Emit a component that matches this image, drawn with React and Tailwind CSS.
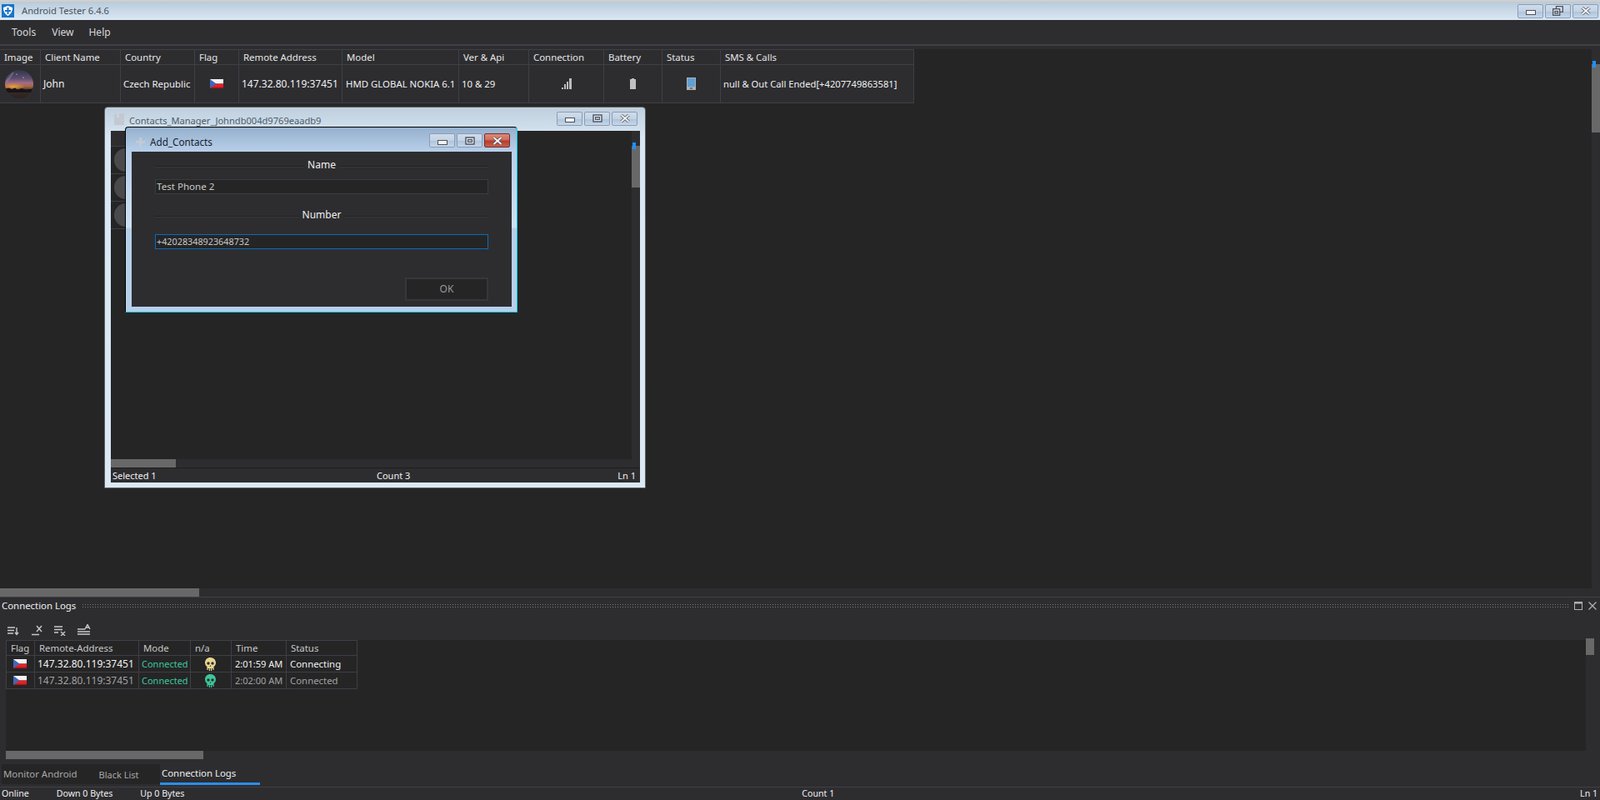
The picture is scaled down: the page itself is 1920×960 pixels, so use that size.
import React from 'react';

const mainCols = 'grid grid-cols-[49px_96px_89px_53px_124px_140px_84px_90px_70px_70px_232px]';
const logCols = 'grid grid-cols-[34px_125px_62px_49px_66px_85px]';

const mainHeaders = ['Image', 'Client Name', 'Country', 'Flag', 'Remote Address', 'Model', 'Ver & Api', 'Connection', 'Battery', 'Status', 'SMS & Calls'];
const logHeaders = ['Flag', 'Remote-Address', 'Mode', 'n/a', 'Time', 'Status'];

const logRows = [
  { address: '147.32.80.119:37451', time: '2:01:59 AM', status: 'Connecting', skull: '#e8d590', text: 'text-[#f2f2f2]' },
  { address: '147.32.80.119:37451', time: '2:02:00 AM', status: 'Connected', skull: '#3cc79b', text: 'text-[#a2a2a2]' },
];

const CzechFlag = () => (
  <svg width="16" height="11" viewBox="0 0 16 11">
    <rect width="16" height="5.5" fill="#f4f4f6" />
    <rect y="5.5" width="16" height="5.5" fill="#e0242c" />
    <rect y="9.5" width="16" height="1.5" fill="#b5121a" />
    <path d="M0 0 L7.5 5.5 L0 11 Z" fill="#3f68b8" />
  </svg>
);

const Avatar = () => (
  <svg width="34" height="34" viewBox="0 0 34 34">
    <defs>
      <linearGradient id="sky" x1="0" y1="0" x2="0" y2="1">
        <stop offset="0" stopColor="#33344c" />
        <stop offset="0.3" stopColor="#5c4f6c" />
        <stop offset="0.46" stopColor="#a56c88" />
        <stop offset="0.58" stopColor="#a8683e" />
        <stop offset="0.72" stopColor="#3c2c26" />
        <stop offset="1" stopColor="#2a211f" />
      </linearGradient>
      <radialGradient id="glow" cx="0.5" cy="0.5" r="0.5">
        <stop offset="0" stopColor="#eca238" />
        <stop offset="1" stopColor="#eca238" stopOpacity="0" />
      </radialGradient>
      <clipPath id="round"><circle cx="17" cy="17" r="17" /></clipPath>
    </defs>
    <g clipPath="url(#round)">
      <rect width="34" height="34" fill="url(#sky)" />
      <ellipse cx="10" cy="20" rx="14" ry="4.5" fill="url(#glow)" />
      <path d="M2 14 L10 3" stroke="#8c90a8" strokeWidth="2" opacity="0.5" />
      <path d="M0 22.5 L5 21.5 L8 23 L12 21.5 L15 23.5 L20 22 L25 23.5 L34 22.5 V27 H0 Z" fill="#17141a" />
      <circle cx="14" cy="5" r="0.6" fill="#fff" />
      <circle cx="22" cy="9" r="0.6" fill="#fff" />
    </g>
  </svg>
);

const SignalIcon = () => (
  <svg width="12" height="13" viewBox="0 0 12 13" fill="#bcbcbc">
    <rect x="0" y="11" width="2" height="2" />
    <rect x="3" y="7" width="2" height="6" />
    <rect x="6" y="4" width="2" height="9" />
    <rect x="9" y="0" width="3" height="13" />
  </svg>
);

const BatteryIcon = () => (
  <svg width="7" height="13" viewBox="0 0 7 13" fill="#c0c0c0">
    <rect x="2" y="0" width="3" height="1" />
    <rect x="0" y="1" width="7" height="12" />
  </svg>
);

const TabletIcon = () => (
  <svg width="11" height="15" viewBox="0 0 11 15">
    <rect width="11" height="15" fill="#b0b0b0" />
    <rect x="1" y="1" width="9" height="10" fill="#5f9fd4" />
    <rect x="4" y="12.5" width="3" height="1" fill="#333" />
  </svg>
);

const Skull = ({ color }) => (
  <svg width="13" height="16" viewBox="0 0 13 16">
    <path d="M6.5 0 C10.2 0 13 2.6 13 6.2 C13 8.6 11.8 10 10.6 10.8 V15 H9.4 V13 H8.2 V16 H7 V13 H6 V16 H4.8 V13 H3.6 V15 H2.4 V10.8 C1.2 10 0 8.6 0 6.2 C0 2.6 2.8 0 6.5 0 Z" fill={color} />
    <circle cx="4" cy="7" r="1.7" fill="#2a2a2c" />
    <circle cx="9" cy="7" r="1.7" fill="#2a2a2c" />
    <path d="M6.5 9 L7.4 10.8 H5.6 Z" fill="#2a2a2c" />
  </svg>
);

// caption buttons, same frame everywhere, only the glyph and tint change
const CaptionButton = ({ kind, danger }) => (
  <div className={`w-[31px] h-[17px] rounded-[2px] border flex items-center justify-center ${danger
    ? 'border-[#7a2c2c] bg-[linear-gradient(#dc8a78_0%,#cf6a5a_48%,#b03c30_52%,#c9604c_100%)]'
    : 'border-[#8b9cb8] bg-[linear-gradient(#cfdcea_0%,#c3d3e4_50%,#adc3da_52%,#c6d7e8_100%)]'}`}>
    {kind === 'min' && (
      <svg width="12" height="6" viewBox="0 0 12 6" className="mt-1">
        <rect x="0.5" y="0.5" width="11" height="5" fill="#f2f2f2" stroke="#4b5260" />
      </svg>
    )}
    {kind === 'max' && (
      <svg width="12" height="10" viewBox="0 0 12 10">
        <rect x="1" y="1" width="10" height="8" fill="#e4e8ee" stroke="#4b5260" strokeWidth="1.4" />
        <rect x="3.5" y="3.5" width="5" height="3" fill="#aab7c8" stroke="#4b5260" />
      </svg>
    )}
    {kind === 'restore' && (
      <svg width="13" height="12" viewBox="0 0 13 12" fill="none" stroke="#4b5260" strokeWidth="1.3">
        <rect x="4.5" y="0.7" width="7.8" height="6.6" fill="#dfe5ec" />
        <rect x="0.7" y="3.7" width="8" height="7.6" fill="#dfe5ec" />
        <rect x="3" y="6.5" width="3.5" height="2.5" />
      </svg>
    )}
    {kind === 'close' && (
      <svg width="12" height="10" viewBox="0 0 12 10">
        <path d="M1.5 1 L10.5 9 M10.5 1 L1.5 9" stroke="#4b5260" strokeWidth="3.4" />
        <path d="M1.5 1 L10.5 9 M10.5 1 L1.5 9" stroke="#f4f4f4" strokeWidth="1.8" />
      </svg>
    )}
  </div>
);

const Toolbar = () => (
  <div className="h-[30px] flex items-end pb-[3px] pl-[9px] gap-[14px] text-[#c8c8c8]">
    <svg width="14" height="13" viewBox="0 0 14 13" fill="none" stroke="currentColor" strokeWidth="1.4">
      <path d="M0 3 H9 M0 6.5 H8 M0 10 H7 M11 3 V11 M9 9 L11 11.5 L13 9" />
    </svg>
    <svg width="13" height="14" viewBox="0 0 13 14" fill="none" stroke="currentColor" strokeWidth="1.4" className="ml-px">
      <path d="M0 12.5 H9 M6 2 L12 9 M12 2 L6 9" />
    </svg>
    <svg width="14" height="13" viewBox="0 0 14 13" fill="none" stroke="currentColor" strokeWidth="1.4">
      <path d="M0 2 H10 M0 5.5 H10 M0 9 H5 M8 8 L13 13 M13 8 L8 13" />
    </svg>
    <svg width="16" height="14" viewBox="0 0 16 14" fill="none" stroke="currentColor" strokeWidth="1.4">
      <path d="M0 6 H9 M0 9 H15 M0 12 H15 M9 6 L12 0.5 L15 6 M10 4 H14" />
    </svg>
  </div>
);

const AddContactsDialog = () => (
  <div className="absolute left-[150px] top-[152px] w-[471px] h-[223px] rounded-t-[4px] border border-black border-r-[#10c8e0] border-b-[#10c8e0] flex flex-col bg-[linear-gradient(#96b0cd_0%,#b7cfe9_13%,#cfe1f3_54%,#b6cfe9_55%,#b6cfe9_100%)]">
    <div className="h-[29px] flex items-center pl-[12px] pr-[8px] pt-[5px]">
      <svg width="11" height="11" viewBox="0 0 11 11" fill="#c0cbd6">
        <path d="M4 0 H7 V4 H11 V7 H7 V11 H4 V7 H0 V4 H4 Z" />
      </svg>
      <span className="ml-[6px] mt-px text-[11.7px] text-[#18222e]">Add_Contacts</span>
      <div className="ml-auto flex gap-[2px] -mt-[3px]">
        <CaptionButton kind="min" />
        <CaptionButton kind="max" />
        <CaptionButton kind="close" danger />
      </div>
    </div>
    <div className="ml-[7px] mr-[6px] mb-[6px] flex-1 bg-[#2d2d30] px-[28px] pt-[8px] text-[#c8c8c8]">
      <div className="flex items-center h-4 gap-[5px] text-[12px] text-[#f0f0f0]">
        <div className="flex-1 h-[2px] mt-1 bg-[#1f1f22] border-b border-[#3a3a3e]" />
        <span>Name</span>
        <div className="flex-1 h-[2px] mt-1 bg-[#1f1f22] border-b border-[#3a3a3e]" />
      </div>
      <div className="mt-[9px] h-[18px] px-[1px] flex items-center bg-[#252526] border border-[#3c3c40] text-[11.6px]">Test Phone 2</div>
      <div className="mt-[17px] flex items-center h-4 gap-[5px] text-[12px] text-[#f0f0f0]">
        <div className="flex-1 h-[2px] mt-1 bg-[#1f1f22] border-b border-[#3a3a3e]" />
        <span>Number</span>
        <div className="flex-1 h-[2px] mt-1 bg-[#1f1f22] border-b border-[#3a3a3e]" />
      </div>
      <div className="mt-[15px] h-[18px] px-[1px] flex items-center bg-[#252526] border border-[#0b6cb8] text-[10.8px]">+42028348923648732</div>
      <div className="mt-[34px] flex justify-end">
        <div className="w-[100px] h-[28px] flex items-center justify-center bg-[#252526] border-2 border-[#37373b] text-[12px] text-[#999999]">OK</div>
      </div>
    </div>
  </div>
);

const ContactsWindow = () => (
  <div className="absolute left-[125px] top-[128px] w-[650px] h-[458px] rounded-t-[4px] border border-[#5c5f63] flex flex-col bg-[linear-gradient(#bfcfdd_0%,#d8e6f3_8%,#dce9f5_100%)]">
    <div className="h-[28px] flex items-center pl-[11px] pr-[9px]">
      <svg width="12" height="14" viewBox="0 0 12 14" fill="#c4c9cf">
        <path d="M0 1 H3 V5 H6 V0 H11 L12 1 V14 H0 Z" />
      </svg>
      <span className="ml-[6px] mt-[4px] text-[11.1px] text-[#4d5c6b]">Contacts_Manager_Johndb004d9769eaadb9</span>
      <div className="ml-auto flex gap-[2px] -mt-[2px]">
        <CaptionButton kind="min" />
        <CaptionButton kind="max" />
        <CaptionButton kind="close" />
      </div>
    </div>
    <div className="ml-[7px] mr-[6px] mb-[6px] flex-1 flex flex-col bg-[#2d2d30]">
      <div className="h-[394px] flex">
        <div className="flex-1 bg-[#252526] flex flex-col">
          <div className="w-[400px] h-[19px] bg-[#2d2d30] border-b border-[#3f3f46]" />
          {['1', '2', '3'].map((id) => (
            <div key={id} className="w-[400px] h-[33px] border-b border-[#3f3f46] flex items-center pl-[4px]">
              <div className="w-7 h-7 rounded-full bg-[#4a4a4c]" />
            </div>
          ))}
        </div>
        <div className="w-2.5 bg-[#2d2d30] pt-[18px] relative">
          <div className="h-[50px] bg-[#686868]" />
          <div className="absolute left-[1px] top-[14px] w-1 h-2 bg-[#1e90ff]" />
        </div>
      </div>
      <div className="h-2.5 bg-[#2d2d30]">
        <div className="h-full w-[78px] bg-[#686868]" />
      </div>
      <div className="h-[18px] border-t border-[#1e1e20] grid grid-cols-[317px_1fr_1fr] items-center px-[2px] text-[11px] text-[#f0f0f0]">
        <span>Selected 1</span>
        <span>Count 3</span>
        <span className="text-right pr-[3px]">Ln 1</span>
      </div>
    </div>
  </div>
);

export default function App() {
  return (
    <div className="relative w-[1920px] h-[960px] overflow-hidden flex flex-col bg-[#2d2d30] text-[11.4px] leading-none font-['Open_Sans',sans-serif] text-[#f0f0f0]">
      {/* title bar */}
      <div className="h-6 flex items-center pl-[2px] pr-[2px] border-t-2 border-[#d0d0d0] bg-[linear-gradient(#b9cada,#dbe8f4)]">
        <svg width="15" height="16" viewBox="0 0 15 16">
          <rect width="15" height="16" fill="#1874c8" />
          <path d="M7.5 2 L13 4 C13 9 11 12 7.5 14 C4 12 2 9 2 4 Z" fill="#fff" />
          <path d="M6.5 4 H8.5 V7 H11 V9 H8.5 V12 H6.5 V9 H4 V7 H6.5 Z" fill="#1874c8" />
        </svg>
        <span className="ml-[9px] text-[11.2px] text-[#46535f]">Android Tester 6.4.6</span>
        <div className="ml-auto flex gap-[2px]">
          <CaptionButton kind="min" />
          <CaptionButton kind="restore" />
          <CaptionButton kind="close" />
        </div>
      </div>

      {/* menu */}
      <div className="h-[29px] flex items-center pl-[14px] text-[12px] text-[#d8d8d8]">
        <span>Tools</span>
        <span className="ml-[19px]">View</span>
        <span className="ml-[18px]">Help</span>
      </div>
      <div className="h-[2px] bg-[#3f3f46]" />

      {/* clients list */}
      <div className="mt-1 h-[647px] flex">
        <div className="flex-1 bg-[#252526]">
          <div className="w-[1097px] border-t border-r border-[#3f3f46] bg-[#2d2d30]">
            <div className={`${mainCols} h-[18px] border-b border-[#3f3f46] text-[#e6e6e6]`}>
              {mainHeaders.map((h) => (
                <div key={h} className="border-r border-[#3f3f46] last:border-r-0 flex items-center pl-[5px]">{h}</div>
              ))}
            </div>
            <div className={`${mainCols} h-[46px] border-b border-[#3f3f46]`}>
              <div className="border-r border-[#3f3f46] flex items-center pl-[6px]"><Avatar /></div>
              <div className="border-r border-[#3f3f46] flex items-center pl-[3px] text-[12px]">John</div>
              <div className="border-r border-[#3f3f46] flex items-center pl-[3px]">Czech Republic</div>
              <div className="border-r border-[#3f3f46] flex items-center justify-center"><CzechFlag /></div>
              <div className="border-r border-[#3f3f46] flex items-center pl-[3px] text-[12px]">147.32.80.119:37451</div>
              <div className="border-r border-[#3f3f46] flex items-center pl-[4px] whitespace-nowrap">HMD GLOBAL NOKIA 6.1</div>
              <div className="border-r border-[#3f3f46] flex items-center pl-[3px]">10 &amp; 29</div>
              <div className="border-r border-[#3f3f46] flex items-center justify-center"><SignalIcon /></div>
              <div className="border-r border-[#3f3f46] flex items-center justify-center"><BatteryIcon /></div>
              <div className="border-r border-[#3f3f46] flex items-center justify-center"><TabletIcon /></div>
              <div className="flex items-center pl-[3px] whitespace-nowrap text-[11.2px]">null &amp; Out Call Ended[+4207749863581]</div>
            </div>
          </div>
        </div>
        <div className="w-2.5 pt-[18px] relative">
          <div className="h-[82px] bg-[#686868]" />
          <div className="absolute left-[1px] top-[14px] w-1 h-2 bg-[#1e90ff]" />
        </div>
      </div>
      <div className="h-2.5">
        <div className="h-full w-[239px] bg-[#686868]" />
      </div>
      <div className="h-px bg-[#3f3f46]" />

      {/* connection logs panel */}
      <div className="h-[19px] flex items-center pl-[2px] pr-[4px] text-[#f0f0f0]">
        <span>Connection Logs</span>
        <div className="ml-[7px] mr-[5px] flex-1 h-[5px] bg-[radial-gradient(#77777a_0.6px,transparent_0.7px)] bg-[length:3px_3px]" />
        <svg width="10" height="10" viewBox="0 0 10 10" fill="none" stroke="#b0b0b0">
          <rect x="0.5" y="0.5" width="9" height="9" />
          <rect x="0" y="0" width="10" height="2.5" fill="#b0b0b0" stroke="none" />
        </svg>
        <svg width="10" height="10" viewBox="0 0 10 10" stroke="#b0b0b0" strokeWidth="1.3" className="ml-[7px]">
          <path d="M0.5 0.5 L9.5 9.5 M9.5 0.5 L0.5 9.5" />
        </svg>
      </div>
      <Toolbar />
      <div className="h-[135px] flex">
        <div className="ml-[7px] mt-[2px] w-[1896px] bg-[#252526]">
          <div className="w-[422px] border-t border-x border-[#3f3f46]">
            <div className={`${logCols} h-[18px] border-b border-[#3f3f46] text-[#c8c8c8]`}>
              {logHeaders.map((h) => (
                <div key={h} className="border-r border-[#3f3f46] last:border-r-0 flex items-center pl-[5px]">{h}</div>
              ))}
            </div>
            {logRows.map((row) => (
              <div key={row.time} className={`${logCols} h-5 border-b border-[#3f3f46] ${row.text}`}>
                <div className="border-r border-[#3f3f46] flex items-center justify-center pr-[2px]"><CzechFlag /></div>
                <div className="border-r border-[#3f3f46] flex items-center pl-[3px] text-[12px]">{row.address}</div>
                <div className="border-r border-[#3f3f46] flex items-center pl-[3px] text-[11px] text-[#3cc79b]">Connected</div>
                <div className="border-r border-[#3f3f46] flex items-center justify-center pr-[2px]"><Skull color={row.skull} /></div>
                <div className="border-r border-[#3f3f46] flex items-center pl-[4px] whitespace-nowrap text-[11px]">{row.time}</div>
                <div className="flex items-center pl-[4px]">{row.status}</div>
              </div>
            ))}
          </div>
        </div>
        <div className="w-2.5 h-5 bg-[#686868]" />
      </div>
      <div className="h-2.5 ml-[7px]">
        <div className="h-full w-[237px] bg-[#686868]" />
      </div>

      {/* tabs */}
      <div className="mt-1.5 ml-[2px] h-[25px] flex items-stretch">
        <div className="w-[190px] h-6 bg-[#252526] flex items-center pl-[2px] text-[#a8a8a8]">
          <span>Monitor Android</span>
          <span className="ml-[26px] text-[11px]">Black List</span>
        </div>
        <div className="w-[120px] border-b-[3px] border-[#2a8ee8] flex items-center pl-[2px] text-[#f0f0f0]">Connection Logs</div>
      </div>

      {/* status bar */}
      <div className="mt-[2px] h-4 border-t border-[#3f3f46] flex items-center px-[2px] text-[10.6px]">
        <span>Online</span>
        <span className="ml-[33px]">Down 0 Bytes</span>
        <span className="ml-[33px]">Up 0 Bytes</span>
        <span className="ml-[741px]">Count 1</span>
        <span className="ml-auto pr-[1px]">Ln 1</span>
      </div>

      <ContactsWindow />
      <AddContactsDialog />
    </div>
  );
}
